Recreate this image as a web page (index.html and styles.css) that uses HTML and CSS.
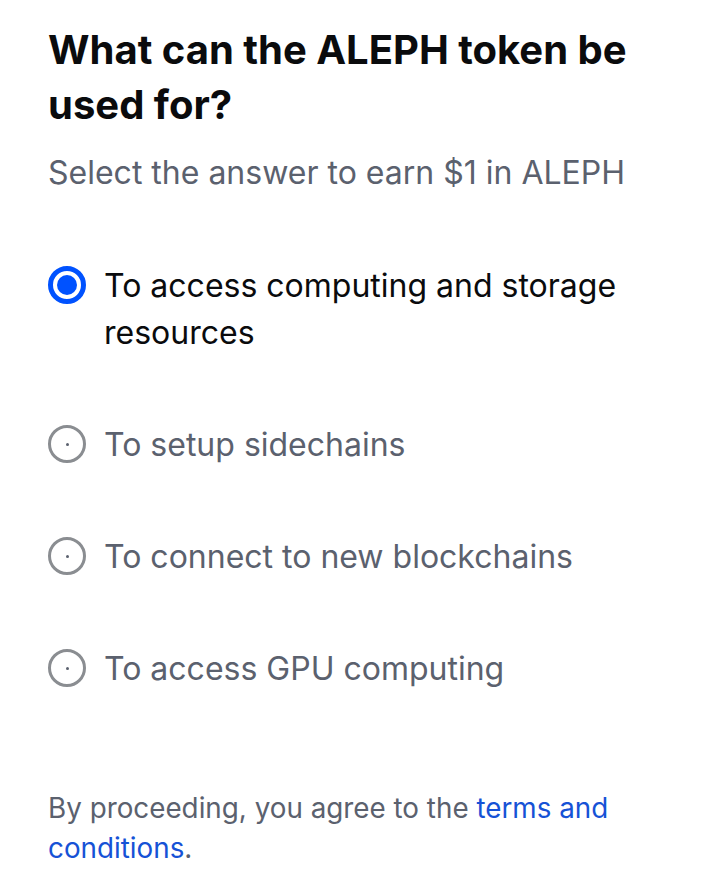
FILE: index.html
```html
<!DOCTYPE html>
<html>
<head>
<meta charset="utf-8">
<link rel="stylesheet" href="styles.css">
</head>
<body>
<main class="page">
  <h1 class="title">What can the ALEPH token be used for?</h1>
  <p class="subtitle">Select the answer to earn $1 in ALEPH</p>
  <ul class="options">
    <li class="option selected"><span class="radio"></span><span class="label">To access computing and storage resources</span></li>
    <li class="option"><span class="radio"></span><span class="label">To setup sidechains</span></li>
    <li class="option"><span class="radio"></span><span class="label">To connect to new blockchains</span></li>
    <li class="option"><span class="radio"></span><span class="label">To access GPU computing</span></li>
  </ul>
  <p class="footer">By proceeding, you agree to the <a class="link" href="#">terms and conditions</a>.</p>
</main>
</body>
</html>
```
FILE: styles.css
```css
html, body { margin: 0; padding: 0; background: #fff; }
body { font-family: Inter, "Noto Sans", sans-serif; }
.page { padding: 22px 48px 0 48px; }
.title { margin: 0; font-size: 40px; line-height: 55px; font-weight: 700; color: #0a0b0d; }
.subtitle { margin: 21px 0 0 0; font-size: 32px; line-height: 40px; color: #5b616e; }
.options { list-style: none; margin: 69px 0 0 0; padding: 0; display: flex; flex-direction: column; gap: 65px; }
.option { display: flex; align-items: flex-start; gap: 18px; }
.radio { flex: none; width: 38px; height: 38px; box-sizing: border-box; border-radius: 50%; border: 3px solid #8a8d91; margin-top: 4px; position: relative; }
.radio::after { content: ""; position: absolute; left: 50%; top: 50%; width: 3px; height: 3px; margin: -1.5px 0 0 -1.5px; border-radius: 50%; background: #5b616e; }
.option.selected .radio { border: 5px solid #0052ff; }
.option.selected .radio::after { width: 20px; height: 20px; margin: -10px 0 0 -10px; background: #0052ff; }
.label { font-size: 32px; line-height: 47px; color: #5b616e; }
.option.selected .label { color: #0a0b0d; }
.footer { margin: 96px 0 0 0; font-size: 27.8px; line-height: 40px; color: #5b616e; }
.link { color: #1652d6; text-decoration: none; }
```
